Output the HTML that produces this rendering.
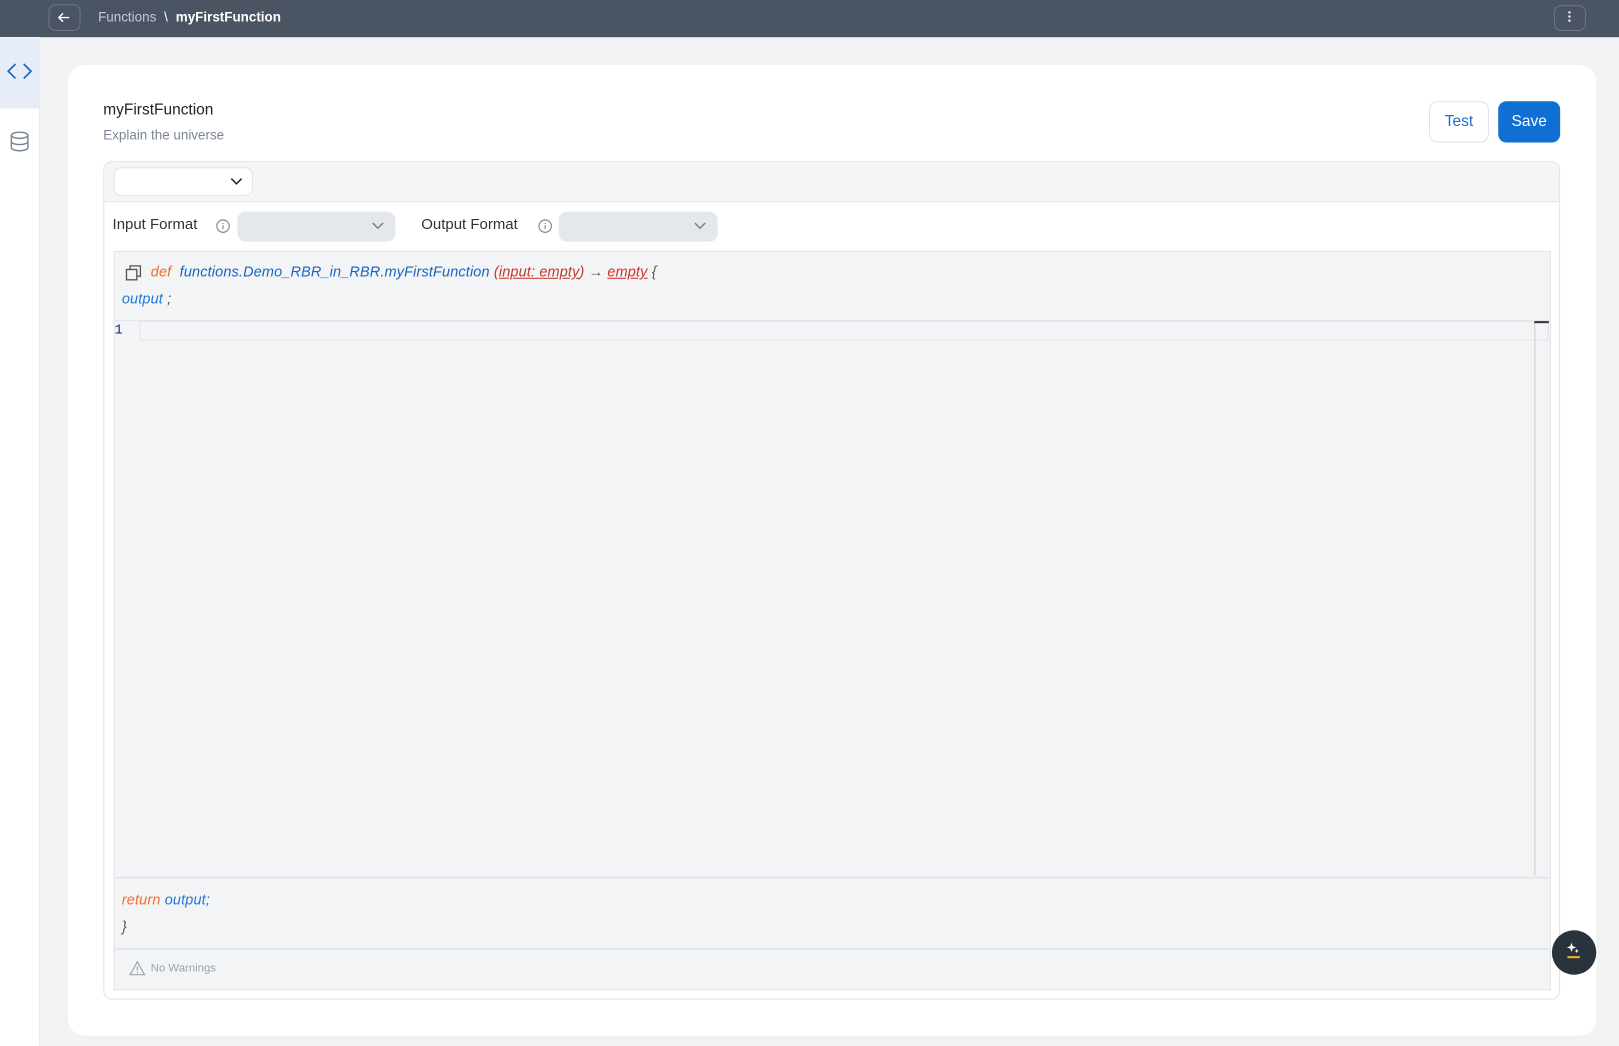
<!DOCTYPE html>
<html><head><meta charset="utf-8"><style>
*{box-sizing:border-box;margin:0;padding:0}
body{width:1619px;height:1046px;overflow:hidden;background:#f1f2f3;font-family:"Liberation Sans",sans-serif}
#w{position:absolute;left:0;top:0;width:1568px;height:1013px;transform:scale(1.03253);transform-origin:0 0}
.a{position:absolute}
.hdr{left:0;top:0;width:1568px;height:36px;background:#4a5463}
.btn{border:1px solid #6b7584;border-radius:7px}
.it{font-style:italic;font-size:14px;letter-spacing:0.15px}
</style></head><body><div id="w">
<div class="a hdr"></div>
<div class="a btn" style="left:47px;top:4px;width:31px;height:26px"></div>
<svg class="a" style="left:54px;top:9px" width="16" height="16" viewBox="0 0 16 16"><path d="M13 8H3M7 4L3 8l4 4" stroke="#fff" stroke-width="1.4" fill="none"/></svg>
<div class="a" style="left:95px;top:9px;font-size:13px;color:#c5cbd3">Functions <span style="margin:0 4px;color:#fff">\</span> <b style="color:#fff">myFirstFunction</b></div>
<div class="a btn" style="left:1505px;top:5px;width:31px;height:25px"></div>
<div class="a" style="left:1519px;top:11px;width:2px;height:2px;background:#fff;box-shadow:0 4px #fff,0 8px #fff"></div>

<div class="a" style="left:0;top:36px;width:39px;height:977px;background:#fff;border-right:1px solid #e2e4e7"></div>
<div class="a" style="left:0;top:37px;width:38px;height:68px;background:#e6edf8"></div>
<svg class="a" style="left:6px;top:60px" width="26" height="18" viewBox="0 0 26 18"><path d="M9 2L2 9l7 7M17 2l7 7-7 7" stroke="#1565c0" stroke-width="1.6" fill="none"/></svg>
<svg class="a" style="left:8px;top:126px" width="22" height="22" viewBox="0 0 22 22"><g stroke="#7a8594" stroke-width="1.4" fill="none"><ellipse cx="11" cy="5" rx="8" ry="3"/><path d="M3 5v12c0 1.7 3.6 3 8 3s8-1.3 8-3V5M3 11c0 1.7 3.6 3 8 3s8-1.3 8-3"/></g></svg>

<div class="a" style="left:66px;top:63px;width:1480px;height:940px;background:#fff;border-radius:16px"></div>
<div class="a" style="left:100px;top:98px;font-size:15px;color:#222;font-weight:500">myFirstFunction</div>
<div class="a" style="left:100px;top:123px;font-size:13px;color:#7a8594">Explain the universe</div>
<div class="a" style="left:1384px;top:98px;width:58px;height:40px;border:1px solid #dde2e8;border-radius:8px;color:#1a6fd0;font-size:15px;text-align:center;line-height:38px">Test</div>
<div class="a" style="left:1451px;top:98px;width:60px;height:40px;background:#0f6fd3;border-radius:8px;color:#fff;font-size:15px;text-align:center;line-height:40px">Save</div>

<div class="a" style="left:100px;top:156px;width:1411px;height:812px;border:1px solid #e1e4e8;border-radius:8px"></div>
<div class="a" style="left:101px;top:157px;width:1409px;height:39px;background:#f4f5f7;border-bottom:1px solid #e1e4e8;border-radius:8px 8px 0 0"></div>
<div class="a" style="left:110px;top:162px;width:135px;height:28px;background:#fff;border:1px solid #e1e4e8;border-radius:8px"></div>
<svg class="a" style="left:222px;top:170px" width="14" height="12"><path d="M2 3l5 5 5-5" stroke="#222" stroke-width="1.5" fill="none"/></svg>

<div class="a" style="left:109px;top:210px;font-size:14.5px;color:#333">Input Format</div>
<svg class="a" style="left:209px;top:212px" width="14" height="14"><circle cx="7" cy="7" r="6" stroke="#777" fill="none"/><path d="M7 6v4M7 4v1" stroke="#777"/></svg>
<div class="a" style="left:230px;top:205px;width:153px;height:29px;background:#e4e7eb;border-radius:8px"></div>
<svg class="a" style="left:359px;top:213px" width="14" height="12"><path d="M2 3l5 5 5-5" stroke="#777" stroke-width="1.3" fill="none"/></svg>
<div class="a" style="left:408px;top:210px;font-size:14.5px;color:#333">Output Format</div>
<svg class="a" style="left:521px;top:212px" width="14" height="14"><circle cx="7" cy="7" r="6" stroke="#777" fill="none"/><path d="M7 6v4M7 4v1" stroke="#777"/></svg>
<div class="a" style="left:541px;top:205px;width:154px;height:29px;background:#e4e7eb;border-radius:8px"></div>
<svg class="a" style="left:671px;top:213px" width="14" height="12"><path d="M2 3l5 5 5-5" stroke="#777" stroke-width="1.3" fill="none"/></svg>

<div class="a" style="left:110px;top:243px;width:1392px;height:716px;background:#f3f4f6;border:1px solid #e1e4e8"></div>
<svg class="a" style="left:121px;top:256px" width="16" height="16"><g stroke="#555" stroke-width="1.3" fill="none"><rect x="1.5" y="5" width="10" height="10"/><path d="M5 5V1.5h10v10h-3.5"/></g></svg>
<div class="a it" style="left:146px;top:255px;color:#555"><span style="color:#f07030">def</span>&nbsp; <span style="color:#1565c0">functions.Demo_RBR_in_RBR.myFirstFunction</span> <span style="color:#c0392b">(<u>input: empty</u>)</span> <span style="font-style:normal">→</span> <u style="color:#d32f2f">empty</u> {</div>
<div class="a it" style="left:118px;top:281px;color:#1e7ad8">output <span style="color:#555">;</span></div>
<div class="a" style="left:110px;top:310px;width:1392px;height:1px;background:#e1e4e8"></div>
<div class="a" style="left:111px;top:312px;font-size:13px;color:#1a237e;font-family:'Liberation Mono',monospace">1</div>
<div class="a" style="left:135px;top:311px;width:1365px;height:19px;border:1px solid #e1e4e8"></div>
<div class="a" style="left:1486px;top:311px;width:1px;height:537px;background:#ccc"></div>
<div class="a" style="left:1486px;top:311px;width:14px;height:2px;background:#333"></div>
<div class="a" style="left:110px;top:849px;width:1392px;height:2px;background:#e4e7eb"></div>
<div class="a it" style="left:118px;top:863px"><span style="color:#f07030">return</span> <span style="color:#1e7ad8">output;</span></div>
<div class="a it" style="left:118px;top:889px;color:#555">}</div>
<div class="a" style="left:110px;top:918px;width:1392px;height:2px;background:#e1e6ec"></div>
<svg class="a" style="left:125px;top:930px" width="16" height="15"><path d="M8 1.5L1 14h14z M8 6v4M8 11.5v1" stroke="#9aa3ae" stroke-width="1.1" fill="none"/></svg>
<div class="a" style="left:146px;top:932px;font-size:11px;color:#9aa3ae">No Warnings</div>

<div class="a" style="left:1503px;top:901px;width:43px;height:43px;border-radius:50%;background:#2a323c"></div>
<svg class="a" style="left:1514px;top:910px" width="20" height="22"><path d="M8 3l1.2 3.3L12.5 7.5 9.2 8.7 8 12 6.8 8.7 3.5 7.5 6.8 6.3z M13 9l.6 1.4L15 11l-1.4.6L13 13l-.6-1.4L11 11l1.4-.6z" fill="#fff"/><rect x="4" y="16" width="12" height="2" fill="#f5b324"/></svg>
</div></body></html>
